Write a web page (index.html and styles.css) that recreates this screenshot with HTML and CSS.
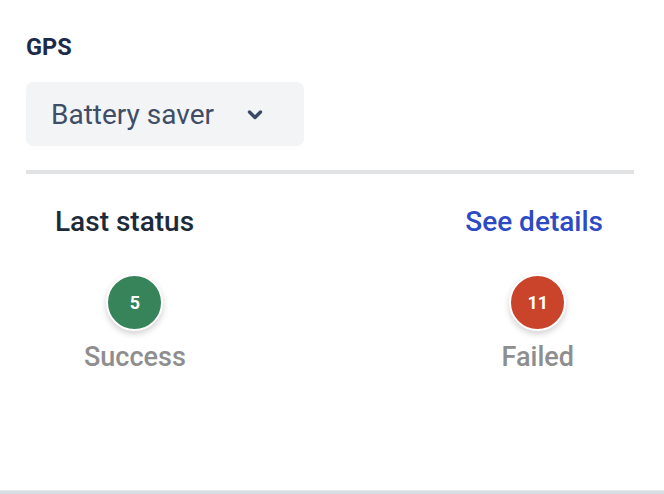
FILE: index.html
```html
<!DOCTYPE html>
<html>
<head>
<meta charset="utf-8">
<link rel="stylesheet" href="styles.css">
</head>
<body>
<div class="panel">
  <div class="label">GPS</div>
  <div class="select">
    <span class="select-text">Battery saver</span>
    <svg class="chev" width="16" height="12" viewBox="0 0 16 12"><path d="M2.5 3 L8 8.5 L13.5 3" fill="none" stroke="#3b4a63" stroke-width="3.4" stroke-linecap="round" stroke-linejoin="round"/></svg>
  </div>
  <div class="divider"></div>
  <div class="status-head">
    <span class="title">Last status</span>
    <a class="link">See details</a>
  </div>
  <div class="stats">
    <div class="stat">
      <div class="badge success">5</div>
      <div class="stat-label">Success</div>
    </div>
    <div class="stat">
      <div class="badge failed">11</div>
      <div class="stat-label">Failed</div>
    </div>
  </div>
</div>
<div class="bottom-bar"></div>
</body>
</html>
```

FILE: styles.css
```css
html, body {
  margin: 0;
  padding: 0;
  background: #ffffff;
  font-family: Roboto, "Liberation Sans", sans-serif;
  width: 664px;
  height: 494px;
  overflow: hidden;
}
body {
  display: flex;
  flex-direction: column;
}
.panel {
  flex: 1;
  width: 608px;
  margin-left: 26px;
  padding-top: 34px;
}
.label {
  font-size: 23.5px;
  font-weight: 700;
  color: #1d2b4a;
  line-height: 26px;
}
.select {
  margin-top: 22px;
  width: 278px;
  height: 64px;
  box-sizing: border-box;
  background: #f3f4f6;
  border-radius: 7px;
  display: flex;
  align-items: center;
  padding-left: 25px;
}
.select-text {
  font-size: 28px;
  color: #3f4d66;
  line-height: 32px;
  padding-top: 2px;
}
.chev {
  margin-left: 33px;
  margin-top: 2px;
}
.divider {
  margin-top: 24px;
  height: 4px;
  background: #e1e2e4;
}
.status-head {
  display: flex;
  justify-content: space-between;
  align-items: baseline;
  padding: 0 31px 0 29px;
  margin-top: 32px;
}
.title {
  font-size: 28px;
  font-weight: 500;
  color: #1c2a3a;
  line-height: 32px;
}
.link {
  font-size: 28px;
  font-weight: 500;
  color: #2d4ac5;
  line-height: 32px;
}
.stats {
  display: flex;
  justify-content: space-between;
  padding: 0 60px 0 58px;
  margin-top: 36px;
}
.stat {
  display: flex;
  flex-direction: column;
  align-items: center;
}
.badge {
  width: 53px;
  height: 53px;
  border-radius: 50%;
  border: 2px solid #ffffff;
  box-shadow: 0 3px 6px rgba(0,0,0,0.18);
  color: #ffffff;
  font-size: 18px;
  font-weight: 700;
  display: flex;
  align-items: center;
  justify-content: center;
}
.success { background: #37835a; }
.failed { background: #c9442a; }
.stat-label {
  margin-top: 10px;
  font-size: 27px;
  font-weight: 500;
  color: #8e8e8e;
  line-height: 32px;
}
.bottom-bar {
  height: 4px;
  background: #dcdfe2;
  border-top: 1px solid #e3e8ec;
  box-sizing: border-box;
}
```
